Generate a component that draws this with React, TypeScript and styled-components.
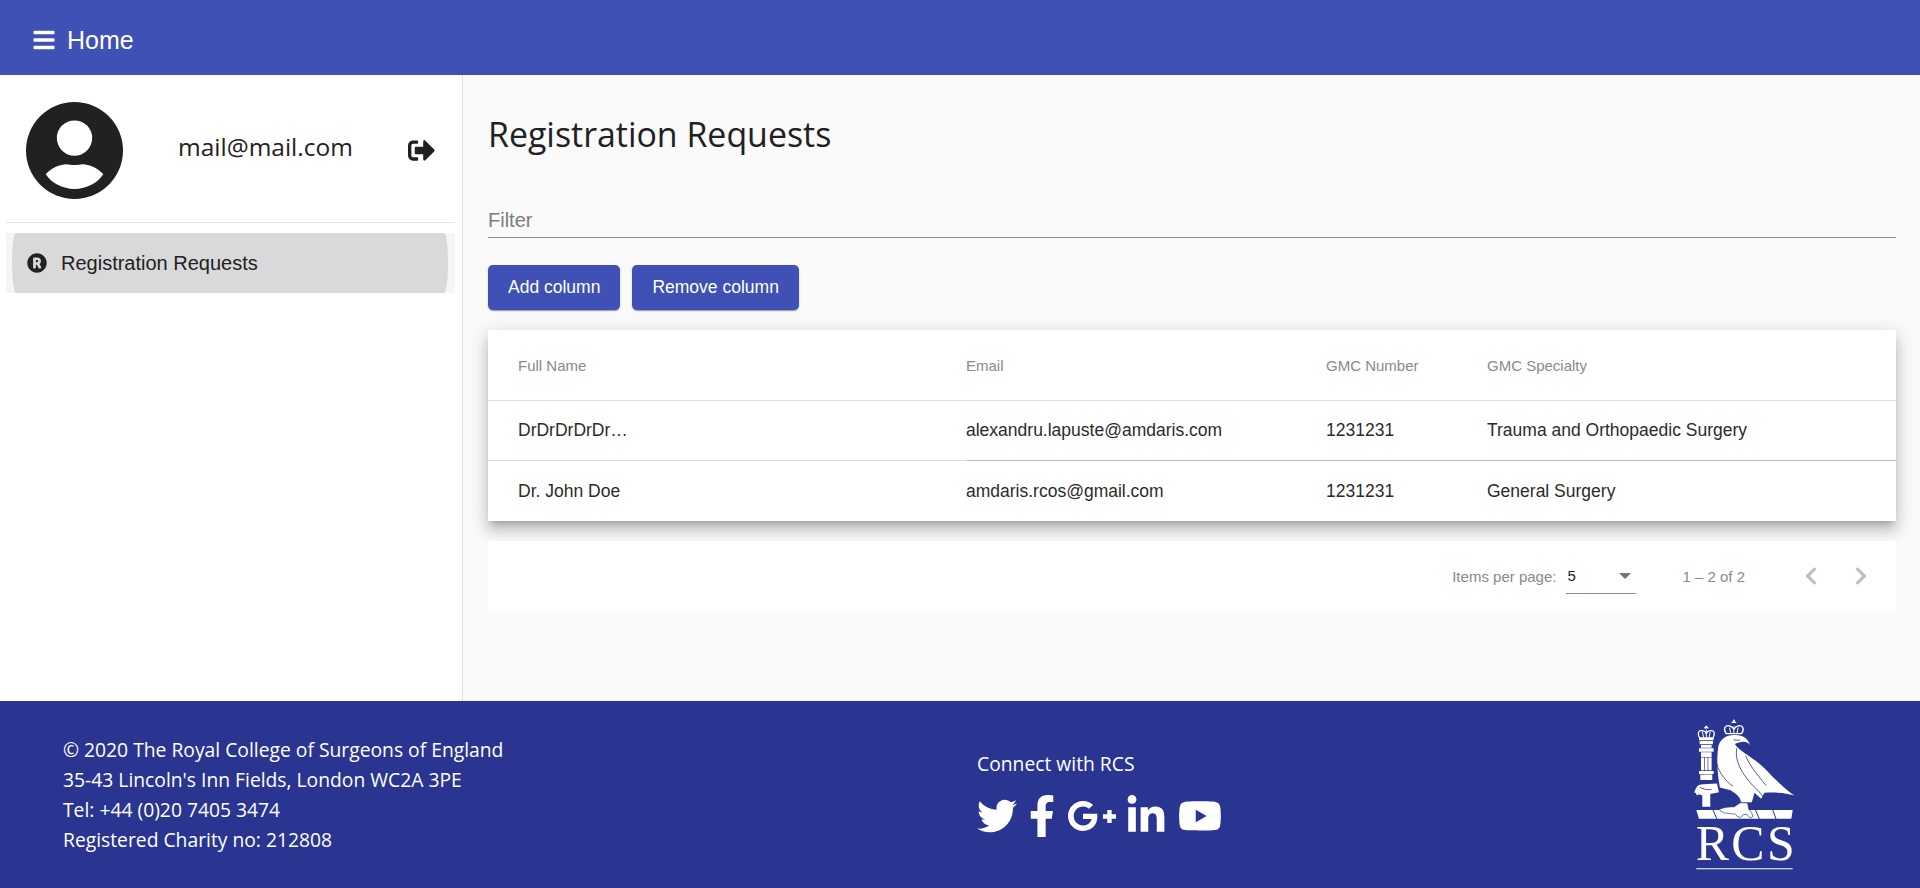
import React from "react";
import styled, { createGlobalStyle } from "styled-components";
import {
  FaBars,
  FaSignOutAlt,
  FaRegistered,
  FaTwitter,
  FaFacebookF,
  FaGooglePlusG,
  FaLinkedinIn,
  FaYoutube,
  FaChevronLeft,
  FaChevronRight,
} from "react-icons/fa";

const GlobalStyle = createGlobalStyle`
  html, body {
    margin: 0;
    padding: 0;
    height: 100%;
    overflow: hidden;
    font-family: "Liberation Sans", Arial, sans-serif;
  }
  #root {
    height: 100%;
  }
`;

const Page = styled.div`
  display: flex;
  flex-direction: column;
  height: 888px;
`;

const Toolbar = styled.header`
  display: flex;
  align-items: center;
  gap: 11px;
  flex: 0 0 75px;
  box-sizing: border-box;
  padding: 5px 0 0 32px;
  background: #3f51b5;
  color: #fff;
  font-size: 25px;
`;

const Middle = styled.div`
  display: flex;
  flex: 1;
  min-height: 0;
`;

const Sidebar = styled.aside`
  flex: 0 0 463px;
  box-sizing: border-box;
  padding: 0 7px 0 6px;
  background: #fff;
  border-right: 1px solid #e0e0e0;
`;

const Profile = styled.div`
  display: flex;
  align-items: center;
  height: 148px;
  box-sizing: border-box;
  padding: 4px 0 0 20px;
  border-bottom: 1px solid #e4e4e4;
`;

const Email = styled.span`
  margin-left: 55px;
  margin-top: -8px;
  width: 230px;
  font-family: "Open Sans", sans-serif;
  font-size: 24.5px;
  color: #212121;
`;

const NavTrack = styled.div`
  margin-top: 10px;
  height: 60px;
  padding: 0 7px 0 6px;
  background: #f5f5f5;
`;

const NavItem = styled.div`
  display: flex;
  align-items: center;
  gap: 14px;
  height: 100%;
  padding-left: 15px;
  background: #d9d9d9;
  border-radius: 4px / 50%;
  color: #212121;
  font-size: 20px;
`;

const Main = styled.main`
  flex: 1;
  min-width: 0;
  padding: 0 24px 0 25px;
  background: #fafafa;
`;

const Title = styled.h1`
  margin: 0;
  padding-top: 36px;
  font-family: "Open Sans", sans-serif;
  font-size: 33.9px;
  line-height: 46px;
  font-weight: 400;
  color: #212121;
`;

const Filter = styled.div`
  margin-top: 45px;
  height: 36px;
  box-sizing: border-box;
  padding-top: 5px;
  border-bottom: 1px solid #8a8a8a;
  font-size: 20px;
  line-height: 27px;
  color: #7d7d7d;
`;

const Actions = styled.div`
  display: flex;
  gap: 12px;
  margin-top: 27px;
`;

const Button = styled.button`
  height: 45px;
  padding: 0 20px;
  border: 0;
  border-radius: 5px;
  background: #3f51b5;
  color: #fff;
  font-family: "Liberation Sans", sans-serif;
  font-size: 17.5px;
  box-shadow: 0 2px 1px -1px rgba(0, 0, 0, 0.2), 0 1px 1px 0 rgba(0, 0, 0, 0.14),
    0 1px 3px 0 rgba(0, 0, 0, 0.12);
`;

const TableCard = styled.div`
  margin-top: 20px;
  background: #fff;
  box-shadow: 0 6px 6px -4px rgba(0, 0, 0, 0.2), 0 10px 12px 1px rgba(0, 0, 0, 0.14),
    0 4px 18px 2px rgba(0, 0, 0, 0.12);
`;

const Row = styled.div<{ $head?: boolean; $last?: boolean; $split?: boolean }>`
  display: grid;
  grid-template-columns: 448px 360px 161px 1fr;
  align-items: center;
  box-sizing: border-box;
  height: ${(p) => (p.$head ? "71px" : "60px")};
  padding-left: 30px;
  border-bottom: ${(p) => (p.$last ? "0" : "1px solid #e0e0e0")};
  /* the reference has a darker rule from the email column onwards */
  ${(p) => p.$split && "border-image: linear-gradient(to right, #e0e0e0 479px, #bdbdbd 479px) 1;"}
  color: ${(p) => (p.$head ? "#8a8a8a" : "#2b2b2b")};
  font-size: ${(p) => (p.$head ? "15px" : "17.5px")};
`;

const Paginator = styled.div`
  display: flex;
  align-items: center;
  justify-content: flex-end;
  height: 70px;
  margin-top: 20px;
  padding-right: 10px;
  background: #fff;
  color: #8a8a8a;
  font-size: 15px;
`;

const PageSelect = styled.div`
  display: flex;
  align-items: center;
  justify-content: space-between;
  box-sizing: border-box;
  width: 70px;
  height: 33px;
  margin: 2px 46px 0 10px;
  padding: 0 5px 2px 1px;
  border-bottom: 1px solid #8a8a8a;
  color: #212121;
`;

const Caret = styled.span`
  width: 0;
  height: 0;
  border-left: 6.5px solid transparent;
  border-right: 6.5px solid transparent;
  border-top: 6.5px solid #757575;
`;

const PageButton = styled.span`
  display: flex;
  align-items: center;
  justify-content: center;
  width: 50px;
  height: 50px;
  color: #c0c0c0;
  font-size: 20px;
`;

const RangeLabel = styled.span`
  margin-right: 41px;
`;

const Footer = styled.footer`
  display: grid;
  grid-template-columns: 914px 719px 1fr;
  flex: 0 0 187px;
  box-sizing: border-box;
  padding-left: 63px;
  background: #2a3592;
  color: #fff;
  font-family: "Open Sans", sans-serif;
  font-size: 19.3px;
`;

const Address = styled.div`
  padding-top: 34px;
  line-height: 30px;
`;

const Connect = styled.div`
  padding-top: 49px;
  line-height: 28px;
`;

const Socials = styled.div`
  display: flex;
  align-items: center;
  gap: 8px;
  margin-top: 16px;
  height: 44px;
`;

const FacebookIcon = styled(FaFacebookF)`
  margin: 0 -4px;
`;

const YoutubeIcon = styled(FaYoutube)`
  margin-left: 3px;
`;

const Logo = styled.svg`
  display: block;
  width: 103px;
  height: 157px;
  margin-top: 16px;
  margin-left: -3px;
`;

const Avatar = () => (
  <svg width="97" height="97" viewBox="0 0 96 96">
    <circle cx="48" cy="48" r="48" fill="#212121" />
    <circle cx="48" cy="35.7" r="17.5" fill="#fff" />
    <path
      d="M19.5 71.5C25 65 34 61.5 40 61.5c4 1 12 1 16 0 6 0 15 3.500 20.500 10C71 80 60 86 48 86S25 80 19.500 71.500z"
      fill="#fff"
    />
  </svg>
);

const RcsLogo = () => (
  <Logo viewBox="100 35 310 470">
    {/* crowns */}
    <g fill="none" stroke="#fff" strokeWidth="4">
      <path d="M120 97c-8-14-4-24 8-22 6 1 10 4 12 8 2-4 6-7 12-8 12-2 16 8 8 22z" />
      <path d="M140 72v24M128 78l4 18M152 78l-4 18" strokeWidth="3" />
      <path d="M200 84c-10-14-4-26 8-24 7 1 12 5 15 10 3-5 8-9 15-10 12-2 18 10 8 24z" />
      <path d="M223 62v22M210 66l4 18M236 66l-4 18" strokeWidth="3" />
    </g>
    <path d="M137 64h6v-4h-6zM134 68h12v-4h-12zM220 48h6v-6h-6zM216 52h14v-4h-14z" fill="#fff" />
    {/* mace */}
    <path
      d="M118 97h44v7h-44zM120 106h40v10h-40zM124 118h32v8h-32zM118 128h44v10h-44zM124 140h32v14h-32zM124 156h10v38h-10zM146 156h10v38h-10zM136 156h8v38h-8zM118 196h44v9h-44zM122 207h36v16h-36zM128 262h24v42h-24z"
      fill="#fff"
    />
    {/* sword guard and hand */}
    <path
      d="M104 262c2-10 8-22 16-24 14-4 34-2 52-4l6 26-18 4c-8 0-12 6-24 6-8 0-14-2-18-4l-6 4-4-8z"
      fill="#fff"
    />
    <path d="M120 244c6 6 22 10 36 8" stroke="#2a3592" strokeWidth="2.500" fill="none" />
    {/* eagle */}
    <path
      d="M176 124c4-24 26-38 52-36 22 0 40 12 43 30-6-8-14-11-24-9-8 1-14 3-21 6 14 24 60 42 92 76 28 30 60 60 87 79-30-8-60-10-90-8l-10 18-20-18-8 28h-32c-4-18-16-26-32-36l-32-8c-8-40-10-88-5-122z"
      fill="#fff"
    />
    <g fill="none" stroke="#2a3592" strokeWidth="2.500">
      <path d="M168 160c6 34 24 62 52 82" />
      <path d="M232 128c-6 30 6 66 48 112" />
      <path d="M258 150c10 24 30 52 62 90" />
      <path d="M222 102c6 2 12 3 20 0" />
      <path d="M280 240c12 10 20 20 30 32" />
    </g>
    {/* perch */}
    <path d="M110 314h290l-4 26H118z" fill="#fff" />
    <g stroke="#2a3592" strokeWidth="3" fill="none">
      <path d="M160 313l12 28M288 313l12 28M340 313l10 28" />
    </g>
    <path
      d="M178 312c14-6 30-8 46-8l18-12h22l4 20c6 6 12 14 12 22l-8 4-10-12-12 2-6 8-10-2-6-8-22-2-14-2z"
      fill="#fff"
      stroke="#2a3592"
      strokeWidth="2"
    />
    <text
      x="108"
      y="465"
      textLength="298"
      lengthAdjust="spacing"
      fontFamily="'Liberation Serif', serif"
      fontSize="150"
      fill="#fff"
    >
      RCS
    </text>
    <rect x="110" y="489" width="290" height="3" fill="#fff" />
  </Logo>
);

const rows = [
  ["DrDrDrDrDr…", "alexandru.lapuste@amdaris.com", "1231231", "Trauma and Orthopaedic Surgery"],
  ["Dr. John Doe", "amdaris.rcos@gmail.com", "1231231", "General Surgery"],
];

export default function App() {
  return (
    <>
      <GlobalStyle />
      <Page>
        <Toolbar>
          <FaBars size={24} />
          <span>Home</span>
        </Toolbar>
        <Middle>
          <Sidebar>
            <Profile>
              <Avatar />
              <Email>mail@mail.com</Email>
              <FaSignOutAlt size={27} color="#212121" />
            </Profile>
            <NavTrack>
              <NavItem>
                <FaRegistered size={20} />
                Registration Requests
              </NavItem>
            </NavTrack>
          </Sidebar>
          <Main>
            <Title>Registration Requests</Title>
            <Filter>Filter</Filter>
            <Actions>
              <Button>Add column</Button>
              <Button>Remove column</Button>
            </Actions>
            <TableCard>
              <Row $head>
                <span>Full Name</span>
                <span>Email</span>
                <span>GMC Number</span>
                <span>GMC Specialty</span>
              </Row>
              {rows.map((r, i) => (
                <Row key={r[1]} $last={i === rows.length - 1} $split={i === 0}>
                  {r.map((c) => (
                    <span key={c}>{c}</span>
                  ))}
                </Row>
              ))}
            </TableCard>
            <Paginator>
              <span>Items per page:</span>
              <PageSelect>
                5<Caret />
              </PageSelect>
              <RangeLabel>1 – 2 of 2</RangeLabel>
              <PageButton>
                <FaChevronLeft />
              </PageButton>
              <PageButton>
                <FaChevronRight />
              </PageButton>
            </Paginator>
          </Main>
        </Middle>
        <Footer>
          <Address>
            <div>© 2020 The Royal College of Surgeons of England</div>
            <div>35-43 Lincoln's Inn Fields, London WC2A 3PE</div>
            <div>Tel: +44 (0)20 7405 3474</div>
            <div>Registered Charity no: 212808</div>
          </Address>
          <Connect>
            <div>Connect with RCS</div>
            <Socials>
              <FaTwitter size={40} />
              <FacebookIcon size={42} />
              <FaGooglePlusG size={50} />
              <FaLinkedinIn size={42} />
              <YoutubeIcon size={44} />
            </Socials>
          </Connect>
          <div>
            <RcsLogo />
          </div>
        </Footer>
      </Page>
    </>
  );
}
